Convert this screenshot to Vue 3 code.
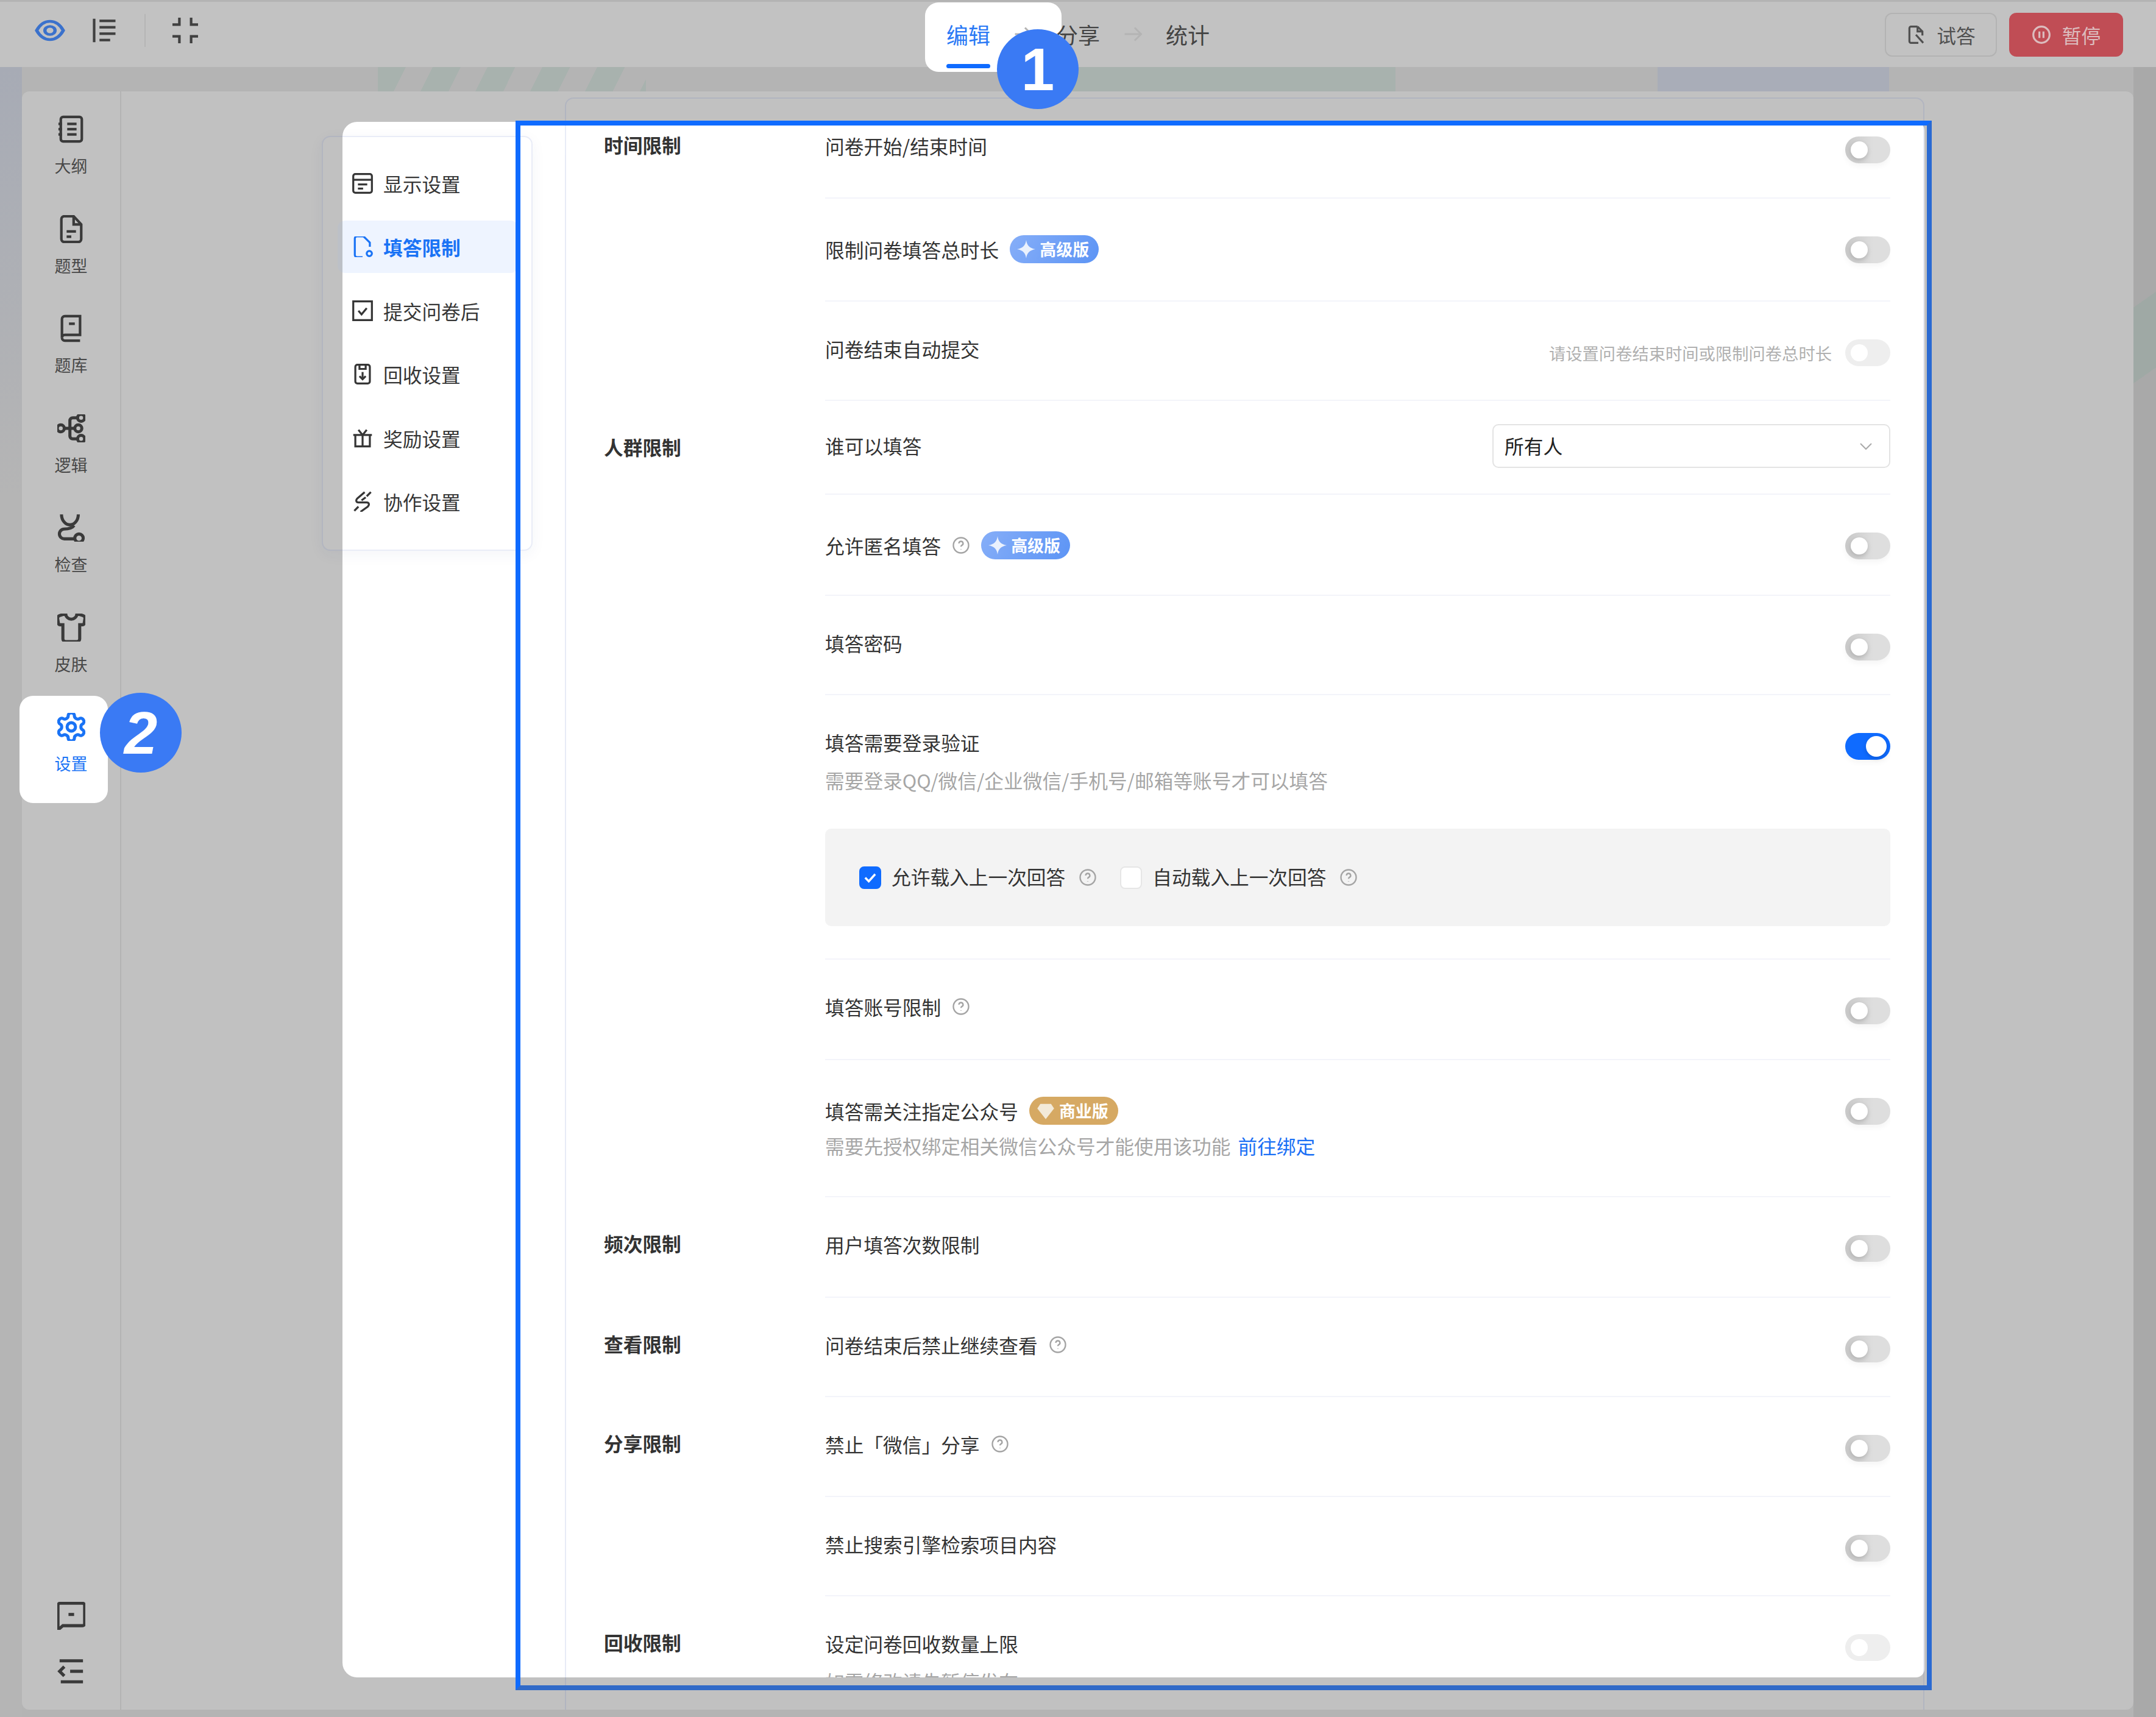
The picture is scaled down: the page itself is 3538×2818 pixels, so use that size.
<script setup>
const circle = (x, y, r) => `M${x - r} ${y}a${r} ${r} 0 1 0 ${r * 2} 0a${r} ${r} 0 1 0 ${-r * 2} 0z`

const icons = {
  eye: ['M1.5 12C4 6.5 7.5 3 12 3s8 3.5 10.5 9C20 17.5 16.5 21 12 21S4 17.5 1.5 12z', circle(12, 12, 4)],
  outline: ['M2 1v22', 'M7 3h15', 'M7 9h15', 'M7 15h15', 'M7 21h10'],
  compress: ['M6.5 0v6.500H0', 'M17.5 0v6.500H24', 'M0 17.5h6.500V24', 'M24 17.5h-6.500V24'],
  arrow: ['M3 12h18', 'M14 5l7 7-7 7'],
  trial: ['M14 2H6a2 2 0 0 0-2 2v16a2 2 0 0 0 2 2h9', 'M14 2l6 6v5', 'M14 2v6h6', 'M12 12l9 10'],
  pause: [circle(12, 12, 10), 'M9.5 8v8', 'M14.5 8v8'],
  notebook: ['M5 1.5h14a2 2 0 0 1 2 2v17a2 2 0 0 1-2 2H5a2 2 0 0 1-2-2v-17a2 2 0 0 1 2-2z', 'M8.5 7.5h8', 'M8.5 12h8', 'M8.5 16.5h8', 'M1 7.5h3', 'M1 12h3', 'M1 16.5h3'],
  file: ['M14 1H6a2.500 2.500 0 0 0-2.500 2.500v17A2.500 2.500 0 0 0 6 23h12a2.500 2.500 0 0 0 2.500-2.500V8z', 'M14 1v7h6.500', 'M8 14h8', 'M8 18.5h4'],
  book: ['M6.5 1.5h13v16h-13A2.500 2.500 0 0 0 4 20V4a2.500 2.500 0 0 1 2.500-2.500z', 'M4 20a2.500 2.500 0 0 0 2.500 2.500h13', 'M10 8h5'],
  logic: [circle(4.5, 12, 2.5), circle(19, 4.5, 2.5), circle(17, 12, 2.5), circle(19, 19.5, 2.5), 'M7 12h7.500', 'M16.5 4.500H13a2 2 0 0 0-2 2v11a2 2 0 0 0 2 2h3.500'],
  check: ['M6 2.500c0 4.500 3 7.500 6 7.500s6-3 6-7.500', 'M15 10.500c-1.500 2-4 2.500-7 2.500a3.500 3.500 0 0 0 0 7h7', circle(18.5, 19.5, 3)],
  shirt: ['M20.38 3.46 16 2a4 4 0 0 1-8 0L3.62 3.46a2 2 0 0 0-1.34 2.23l.58 3.47a1 1 0 0 0 .99.84H6v10c0 1.100.9 2 2 2h8a2 2 0 0 0 2-2V10h2.150a1 1 0 0 0 .99-.84l.58-3.47a2 2 0 0 0-1.34-2.23z'],
  gear: ['M12.22 2h-.44a2 2 0 0 0-2 2v.18a2 2 0 0 1-1 1.73l-.43.25a2 2 0 0 1-2 0l-.15-.08a2 2 0 0 0-2.73.73l-.22.38a2 2 0 0 0 .73 2.73l.15.1a2 2 0 0 1 1 1.72v.51a2 2 0 0 1-1 1.74l-.15.09a2 2 0 0 0-.73 2.73l.22.38a2 2 0 0 0 2.73.73l.15-.08a2 2 0 0 1 2 0l.43.25a2 2 0 0 1 1 1.73V20a2 2 0 0 0 2 2h.44a2 2 0 0 0 2-2v-.18a2 2 0 0 1 1-1.73l.43-.25a2 2 0 0 1 2 0l.15.08a2 2 0 0 0 2.73-.73l.22-.39a2 2 0 0 0-.73-2.73l-.15-.08a2 2 0 0 1-1-1.74v-.5a2 2 0 0 1 1-1.74l.15-.09a2 2 0 0 0 .73-2.73l-.22-.38a2 2 0 0 0-2.73-.73l-.15.08a2 2 0 0 1-2 0l-.43-.25a2 2 0 0 1-1-1.73V4a2 2 0 0 0-2-2z', circle(12, 12, 3)],
  chat: ['M4 3h16a1.500 1.500 0 0 1 1.500 1.500v13A1.500 1.500 0 0 1 20 19H6l-3.500 3V4.500A1.500 1.500 0 0 1 4 3z', 'M10 11h4'],
  collapse: ['M2 3h20', 'M11 12h11', 'M3 21h19', 'M6 8l-4 4 4 4'],
  display: ['M5 3h14a2 2 0 0 1 2 2v14a2 2 0 0 1-2 2H5a2 2 0 0 1-2-2V5a2 2 0 0 1 2-2z', 'M3 8.5h18', 'M7.5 13h9', 'M7.5 17h5'],
  limit: ['M13 2H6.500a2 2 0 0 0-2 2v16a2 2 0 0 0 2 2H12', 'M13 2l6 6v4', circle(18.5, 18.5, 2.5)],
  submit: ['M3 3h18v18H3z', 'M8 12l3 3.500 5-6'],
  recycle: ['M7 3h10a2 2 0 0 1 2 2v14a2 2 0 0 1-2 2H7a2 2 0 0 1-2-2V5a2 2 0 0 1 2-2z', 'M9 3v4h6V3', 'M12 10v7', 'M9 14l3 3 3-3'],
  gift: ['M3 9h18', 'M5 9v11h14V9', 'M12 9v11', 'M8 4l4 5 4-5'],
  collab: ['M14 3 7 9c-2 2-1 4 1 4h8c2 0 3 2 1 4l-7 5', 'M20 3l-4 4', 'M8 17l-4 4', 'M15 8l-4 3'],
  help: [circle(12, 12, 10), 'M9.3 9.5a2.700 2.700 0 1 1 3.900 2.400c-.8.4-1.200 1-1.200 1.900', 'M12 17v.5'],
  chevron: ['M3 8l9 9 9-9'],
  tick: ['M5 12.500l5 5 9-10']
}

const topTabs = ['编辑', '分享', '统计']

const sideItems = [
  { icon: 'notebook', label: '大纲', vb: '0 0 24 24' },
  { icon: 'file', label: '题型', vb: '0 0 24 24' },
  { icon: 'book', label: '题库', vb: '0 0 24 24' },
  { icon: 'logic', label: '逻辑', vb: '2 2 20 20' },
  { icon: 'check', label: '检查', vb: '3 2 20 20' },
  { icon: 'shirt', label: '皮肤', vb: '2 2 20 20' },
  { icon: 'gear', label: '设置', vb: '2 2 20 20', active: true }
]

const navItems = [
  { icon: 'display', label: '显示设置' },
  { icon: 'limit', label: '填答限制', active: true },
  { icon: 'submit', label: '提交问卷后' },
  { icon: 'recycle', label: '回收设置' },
  { icon: 'gift', label: '奖励设置' },
  { icon: 'collab', label: '协作设置' }
]

const sections = [
  {
    title: '时间限制',
    rows: [
      { label: '问卷开始/结束时间', pad: 56 },
      { label: '限制问卷填答总时长', badge: 'pro', pad: 57 },
      { label: '问卷结束自动提交', hint: '请设置问卷结束时间或限制问卷总时长', disabled: true, pad: 55 }
    ]
  },
  {
    title: '人群限制',
    rows: [
      { label: '谁可以填答', select: '所有人', pad: 42 },
      { label: '允许匿名填答', help: true, badge: 'pro', pad: 54 },
      { label: '填答密码', pad: 55 },
      { label: '填答需要登录验证', on: true, desc: '需要登录QQ/微信/企业微信/手机号/邮箱等账号才可以填答', panel: true, pad: 53 },
      { label: '填答账号限制', help: true, pad: 57 },
      { label: '填答需关注指定公众号', badge: 'biz', desc: '需要先授权绑定相关微信公众号才能使用该功能', link: '前往绑定', pad: 61 }
    ]
  },
  { title: '频次限制', rows: [{ label: '用户填答次数限制', pad: 57 }] },
  { title: '查看限制', rows: [{ label: '问卷结束后禁止继续查看', help: true, pad: 55 }] },
  {
    title: '分享限制',
    rows: [
      { label: '禁止「微信」分享', help: true, pad: 56 },
      { label: '禁止搜索引擎检索项目内容', pad: 55 }
    ]
  },
  { title: '回收限制', rows: [{ label: '设定问卷回收数量上限', desc: '如需修改请先暂停发布', disabled: true, pad: 56 }] }
]

const loadOptions = [
  { label: '允许载入上一次回答', checked: true },
  { label: '自动载入上一次回答', checked: false }
]
</script>

<template>
  <div class="app">
    <header class="topbar">
      <div class="top-left">
        <svg class="ic eye" viewBox="0 0 24 24" preserveAspectRatio="none"><path v-for="d in icons.eye" :key="d" :d="d" /></svg>
        <svg class="ic top-ic" viewBox="0 0 24 24"><path v-for="d in icons.outline" :key="d" :d="d" /></svg>
        <span class="top-sep"></span>
        <svg class="ic top-ic" viewBox="0 0 24 24"><path v-for="d in icons.compress" :key="d" :d="d" /></svg>
      </div>

      <nav class="tabs">
        <template v-for="(tab, i) in topTabs" :key="tab">
          <svg v-if="i > 0" class="ic tab-arrow" viewBox="0 0 24 24"><path v-for="d in icons.arrow" :key="d" :d="d" /></svg>
          <span class="tab" :class="{ active: i === 0 }">{{ tab }}</span>
        </template>
      </nav>

      <div class="top-right">
        <button class="btn btn-trial">
          <svg class="ic btn-ic" viewBox="0 0 24 24"><path v-for="d in icons.trial" :key="d" :d="d" /></svg>
          试答
        </button>
        <button class="btn btn-pause">
          <svg class="ic btn-ic" viewBox="0 0 24 24"><path v-for="d in icons.pause" :key="d" :d="d" /></svg>
          暂停
        </button>
      </div>
    </header>

    <div class="body">
      <main class="panel">
        <aside class="sidebar">
          <div class="side-list">
            <div v-for="item in sideItems" :key="item.label" class="side-item" :class="{ active: item.active }">
              <svg class="ic side-ic" :viewBox="item.vb"><path v-for="d in icons[item.icon]" :key="d" :d="d" /></svg>
              <span>{{ item.label }}</span>
            </div>
          </div>
          <div class="side-bottom">
            <svg class="ic side-ic" viewBox="2 2 20 20"><path v-for="d in icons.chat" :key="d" :d="d" /></svg>
            <svg class="ic side-ic collapse" viewBox="0 0 24 24"><path v-for="d in icons.collapse" :key="d" :d="d" /></svg>
          </div>
        </aside>

        <div class="canvas">
          <div class="spotlight"></div>

          <div class="nav-card">
            <div v-for="item in navItems" :key="item.label" class="nav-item" :class="{ active: item.active }">
              <svg class="ic nav-ic" viewBox="2 2 20 20"><path v-for="d in icons[item.icon]" :key="d" :d="d" /></svg>
              <span>{{ item.label }}</span>
            </div>
          </div>

          <div class="form-card">
            <div class="form-clip">
              <section v-for="sec in sections" :key="sec.title" class="section">
                <h3 class="sec-title">{{ sec.title }}</h3>
                <div class="sec-rows">
                  <div v-for="row in sec.rows" :key="row.label" class="row" :style="{ paddingBottom: row.pad + 'px' }">
                    <div class="row-head">
                      <div class="row-main" :class="{ 'with-select': row.select }">
                        <div class="label-line" :class="{ badged: row.badge }">
                          <span>{{ row.label }}</span>
                          <svg v-if="row.help" class="ic help" viewBox="0 0 24 24"><path v-for="d in icons.help" :key="d" :d="d" /></svg>
                          <span v-if="row.badge === 'pro'" class="badge badge-pro">
                            <svg class="badge-ic" viewBox="0 0 24 24"><path d="M12 0c1 7 4 10.500 12 12-8 1.500-11 5-12 12-1-7-4-10.500-12-12 8-1.500 11-5 12-12z" /></svg>
                            高级版
                          </span>
                          <span v-if="row.badge === 'biz'" class="badge badge-biz">
                            <svg class="badge-ic" viewBox="0 0 24 24"><path d="M5 3h14l4 6-11 14L1 9z" /></svg>
                            商业版
                          </span>
                        </div>
                        <div v-if="row.desc" class="desc">
                          {{ row.desc }}<a v-if="row.link" class="desc-link">{{ row.link }}</a>
                        </div>
                      </div>

                      <div v-if="row.select" class="select">
                        <span class="select-text">{{ row.select }}</span>
                        <svg class="ic chevron" viewBox="0 0 24 24"><path v-for="d in icons.chevron" :key="d" :d="d" /></svg>
                      </div>
                      <div v-else class="ctrl">
                        <span v-if="row.hint" class="hint">{{ row.hint }}</span>
                        <span class="toggle" :class="{ on: row.on, disabled: row.disabled }"></span>
                      </div>
                    </div>

                    <div v-if="row.panel" class="sub-panel">
                      <div v-for="opt in loadOptions" :key="opt.label" class="check-item">
                        <span class="checkbox" :class="{ checked: opt.checked }">
                          <svg v-if="opt.checked" class="ic tick" viewBox="0 0 24 24"><path v-for="d in icons.tick" :key="d" :d="d" /></svg>
                        </span>
                        <span class="check-text">{{ opt.label }}</span>
                        <svg class="ic help" viewBox="0 0 24 24"><path v-for="d in icons.help" :key="d" :d="d" /></svg>
                      </div>
                    </div>
                  </div>
                </div>
              </section>
            </div>
          </div>
        </div>
      </main>
    </div>

    <!-- guide overlay -->
    <div class="guide-frame"></div>
    <div class="step step-one">1</div>
    <div class="step step-two">2</div>
  </div>
</template>

<style>
html, body {
  margin: 0;
  background: #b6b6b6;
}
</style>

<style scoped>
.app {
  position: relative;
  width: 3538px;
  height: 2818px;
  display: flex;
  flex-direction: column;
  overflow: hidden;
  font-family: "Noto Sans CJK SC", "Noto Sans", sans-serif;
  font-size: 31.7px;
  color: #333;
}
.ic {
  display: block;
  fill: none;
  stroke: currentColor;
  stroke-width: 2;
  flex: none;
}

.topbar {
  position: relative;
  z-index: 1;
  flex: none;
  box-sizing: border-box;
  height: 110px;
  border-top: 3px solid #b3b3b3;
  background: #c2c2c2;
  display: grid;
  grid-template-columns: 1fr auto 1fr;
  align-items: center;
}
.top-left {
  display: flex;
  align-items: center;
  gap: 44px;
  padding-left: 57px;
  margin-bottom: 14px;
  color: #404040;
}
.eye {
  width: 50px;
  height: 40px;
  color: #3a71cc;
  stroke-width: 2.6;
}
.top-ic {
  width: 42px;
  height: 42px;
  stroke-width: 2.4;
}
.top-sep {
  width: 2px;
  height: 54px;
  background: #b5b5b5;
}

.tabs {
  display: flex;
  align-items: center;
  gap: 36px;
  margin-bottom: 2px;
  font-size: 36px;
  line-height: 50px;
  color: #444;
}
.tab {
  position: relative;
}
.tab.active {
  color: #2a79f5;
}
.tab.active::before {
  content: "";
  position: absolute;
  z-index: -1;
  left: -35px;
  right: -117px;
  top: -27px;
  bottom: -37px;
  background: #fff;
  border-radius: 22px;
}
.tab.active::after {
  content: "";
  position: absolute;
  left: 0;
  right: 0;
  bottom: -31px;
  height: 7px;
  border-radius: 4px;
  background: #0f6bff;
}
.tab-arrow {
  width: 36px;
  height: 36px;
  color: #b4b4b4;
}

.top-right {
  display: flex;
  justify-content: flex-end;
  gap: 20px;
  padding-right: 54px;
}
.btn {
  display: flex;
  align-items: center;
  justify-content: center;
  gap: 18px;
  box-sizing: border-box;
  height: 72px;
  border-radius: 12px;
  font: inherit;
  padding: 0;
}
.btn-trial {
  width: 184px;
  background: transparent;
  border: 2px solid #b3b3b3;
  color: #505050;
}
.btn-pause {
  width: 187px;
  background: #c04d55;
  border: none;
  color: #dcbcbe;
}
.btn-ic {
  width: 32px;
  height: 36px;
  stroke-width: 2.4;
}

.body {
  flex: 1;
  min-height: 0;
  box-sizing: border-box;
  padding: 40px 37px 12px 36px;
  background:
    linear-gradient(#a8b2ae, #a8b2ae) 1760px 0 / 530px 40px no-repeat,
    linear-gradient(#a9adb8, #a9adb8) 2720px 0 / 380px 40px no-repeat,
    repeating-linear-gradient(116.5deg, #a8b2ae 0 41px, transparent 41px 80.5px) 620px 0 / 440px 40px no-repeat,
    linear-gradient(145deg, transparent 35%, #9fa9a5 35% 70%, transparent 70%) 3501px 270px / 37px 330px no-repeat,
    linear-gradient(180deg, #a7abb5, #b5b5b5 26%) 0 0 / 36px 100% no-repeat,
    linear-gradient(#a9a9a9, #a9a9a9) 100% 0 / 37px 100% no-repeat,
    #b4b4b4;
}
.panel {
  height: 100%;
  display: flex;
  background: #c1c1c1;
  border-radius: 12px;
}

.sidebar {
  position: relative;
  z-index: 1;
  flex: none;
  box-sizing: border-box;
  width: 163px;
  border-right: 2px solid #b3b3b3;
  padding: 39px 0 40px;
  display: flex;
  flex-direction: column;
  justify-content: space-between;
}
.side-list {
  display: flex;
  flex-direction: column;
  gap: 61.5px;
}
.side-item {
  position: relative;
  display: flex;
  flex-direction: column;
  align-items: center;
  gap: 18px;
  font-size: 27px;
  line-height: 38px;
  color: #484848;
}
.side-item.active {
  color: #1a73f5;
}
.side-item.active::before {
  content: "";
  position: absolute;
  z-index: -1;
  left: -4px;
  right: 20px;
  top: -28px;
  bottom: -46px;
  background: #fff;
  border-radius: 22px;
}
.side-ic {
  width: 46px;
  height: 46px;
  color: #3a3a3a;
  stroke-width: 2.2;
}
.side-item.active .side-ic {
  color: #1a73f5;
}
.side-bottom {
  display: flex;
  flex-direction: column;
  align-items: center;
  gap: 45px;
}
.side-ic.collapse {
  stroke-width: 2.7;
}

.canvas {
  position: relative;
  flex: 1;
  min-width: 0;
  display: flex;
  align-items: flex-start;
  gap: 53px;
  padding-left: 329px;
}
.spotlight {
  position: absolute;
  left: 363px;
  top: 50px;
  width: 2596px;
  height: 2553px;
  background: #fff;
  border-radius: 24px 14px 14px 24px;
}

.nav-card {
  position: relative;
  flex: none;
  box-sizing: border-box;
  width: 346px;
  margin-top: 73px;
  padding: 33px 0 36px;
  border: 2px solid rgba(70, 100, 190, 0.12);
  border-radius: 14px;
  box-shadow: 0 6px 24px rgba(40, 60, 120, 0.05);
  display: flex;
  flex-direction: column;
  gap: 18.4px;
}
.nav-item {
  display: flex;
  align-items: center;
  gap: 17px;
  height: 86px;
  margin: 0 22px 0 24px;
  padding-left: 24px;
  border-radius: 12px;
  color: #363636;
}
.nav-item.active {
  background: linear-gradient(90deg, #bcc0c7 8px, #eef4ff 8px);
  color: #1a73f5;
  font-weight: 700;
}
.nav-ic {
  width: 34px;
  height: 34px;
  stroke-width: 1.9;
}

.form-card {
  position: relative;
  flex: none;
  box-sizing: border-box;
  width: 2231px;
  height: 2646px;
  margin-top: 10px;
  padding-left: 62px;
  padding-right: 54px;
  border: 2px solid rgba(70, 100, 190, 0.12);
  border-bottom: none;
  border-radius: 14px 14px 0 0;
}
.form-clip {
  height: 2591px;
  overflow: hidden;
}
.section {
  display: flex;
  align-items: flex-start;
}
.sec-title {
  flex: none;
  width: 363px;
  margin: 0;
  padding-top: 53px;
  font-size: 31.7px;
  line-height: 44px;
  font-weight: 700;
  color: #333;
}
.sec-rows {
  flex: 1;
  min-width: 0;
}
.row {
  border-bottom: 2px solid #f3f4fa;
}
.row-head {
  display: flex;
  justify-content: space-between;
  align-items: flex-start;
}
.row-main {
  padding-top: 55px;
}
.row-main.with-select {
  padding-top: 51px;
}
.label-line {
  display: flex;
  align-items: center;
  gap: 18px;
  min-height: 44px;
  line-height: 44px;
}
.label-line.badged {
  min-height: 54px;
  margin-top: 1px;
}
.label-line.badged + .desc {
  margin-top: 8px;
}
.help {
  width: 30px;
  height: 30px;
  color: #a4a4a4;
  stroke-width: 1.9;
}
.badge {
  display: inline-flex;
  align-items: center;
  gap: 7px;
  box-sizing: border-box;
  width: 146px;
  height: 46px;
  padding-left: 12px;
  border-radius: 23px;
  font-size: 27px;
  font-weight: 700;
  color: #fff;
  white-space: nowrap;
}
.badge-pro {
  background: linear-gradient(120deg, #86aef8, #5c94f5);
}
.badge-biz {
  background: #d6a963;
}
.badge-ic {
  width: 30px;
  height: 30px;
  flex: none;
  fill: #eaf1fd;
}
.badge-biz .badge-ic {
  fill: #f3ead8;
}
.desc {
  margin-top: 18px;
  line-height: 44px;
  color: #a6a6a6;
}
.desc-link {
  margin-left: 12px;
  color: #1a6ff5;
}

.ctrl {
  display: flex;
  align-items: center;
  gap: 22px;
  margin-top: 62px;
}
.hint {
  font-size: 27.3px;
  line-height: 44px;
  color: #b0b0b0;
}
.toggle {
  position: relative;
  display: block;
  flex: none;
  width: 74px;
  height: 44px;
  border-radius: 22px;
  background: linear-gradient(90deg, #c8c8c8, #dedede 62%);
  box-shadow: 0 5px 10px rgba(0, 0, 0, 0.04);
}
.toggle::after {
  content: "";
  position: absolute;
  left: 9px;
  top: 8px;
  width: 28px;
  height: 28px;
  border-radius: 50%;
  background: #fff;
  box-shadow: 0 3px 7px rgba(0, 0, 0, 0.16);
}
.toggle.on {
  background: #0f6bff;
}
.toggle.on::after {
  left: 34px;
  top: 5px;
  width: 34px;
  height: 34px;
}
.toggle.disabled {
  background: #eeeeee;
  box-shadow: none;
}
.toggle.disabled::after {
  box-shadow: none;
}

.select {
  display: flex;
  align-items: center;
  justify-content: space-between;
  box-sizing: border-box;
  width: 653px;
  height: 72px;
  margin: 38px 0 0;
  padding: 0 26px 0 18px;
  border: 2px solid #e3e3e3;
  border-radius: 10px;
  color: #222;
}
.select-text {
  margin-bottom: 3px;
}
.chevron {
  width: 24px;
  height: 24px;
  color: #aaa;
}

.sub-panel {
  display: flex;
  align-items: center;
  gap: 38px;
  height: 160px;
  margin-top: 58px;
  padding-left: 56px;
  background: #f3f3f3;
  border-radius: 10px;
}
.check-item {
  display: flex;
  align-items: center;
}
.checkbox {
  display: flex;
  align-items: center;
  justify-content: center;
  box-sizing: border-box;
  width: 36px;
  height: 37px;
  margin-right: 17px;
  border: 2px solid #e6e6e6;
  border-radius: 8px;
  background: #fff;
}
.checkbox.checked {
  background: #0f6bff;
  border-color: #0f6bff;
}
.tick {
  width: 28px;
  height: 28px;
  color: #fff;
  stroke-width: 3;
}
.check-text {
  margin-right: 22px;
  margin-bottom: 4px;
  color: #333;
}

.guide-frame {
  position: absolute;
  z-index: 2;
  left: 846px;
  top: 198px;
  width: 2324px;
  height: 2576px;
  box-sizing: border-box;
  border-style: solid;
  border-width: 8px;
  border-color: #0f6bff #2a6ad2 #316ac8 #0f6bff;
  pointer-events: none;
}
.step {
  position: absolute;
  z-index: 3;
  width: 134px;
  height: 131px;
  border-radius: 50%;
  background: #3a7af4;
  color: #fff;
  display: flex;
  align-items: center;
  justify-content: center;
  font-family: "Liberation Sans", sans-serif;
  font-weight: 700;
  font-size: 98px;
  line-height: 1;
}
.step-one {
  left: 1636px;
  top: 48px;
}
.step-two {
  left: 164px;
  top: 1137px;
  font-style: italic;
}
</style>
